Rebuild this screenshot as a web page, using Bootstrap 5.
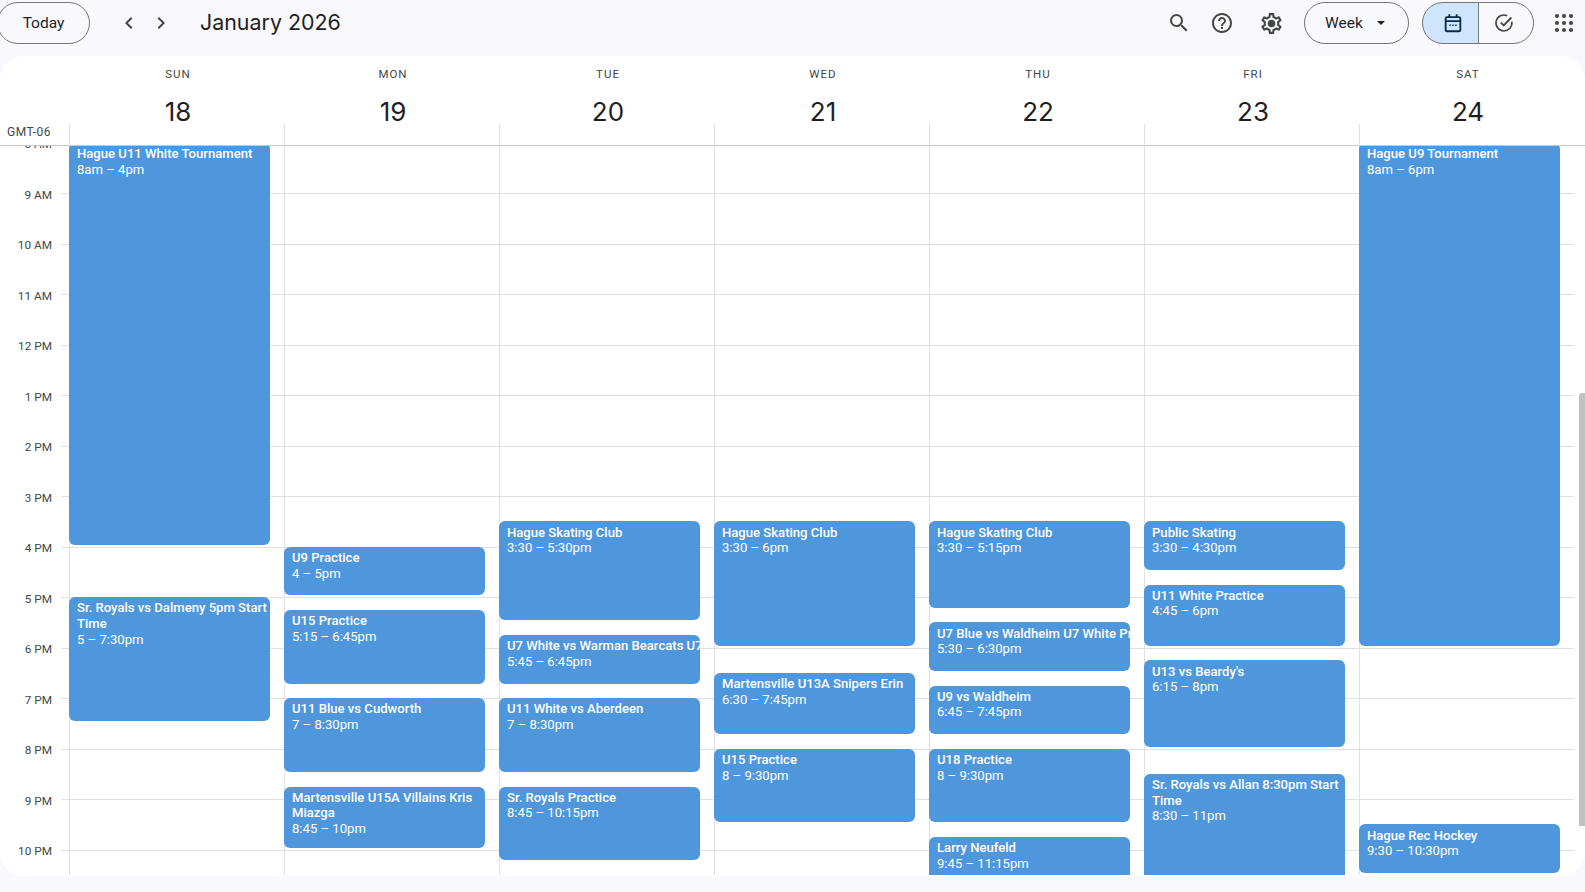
<!DOCTYPE html>
<html lang="en">
<head>
  <meta charset="UTF-8" />
  <meta name="viewport" content="width=device-width, initial-scale=1" />
  <title>Calendar - Week of January 18, 2026</title>
  <link href="https://cdn.jsdelivr.net/npm/bootstrap@5.3.0/dist/css/bootstrap.min.css" rel="stylesheet" />
  <style>
    html, body {
      height: 100%;
      margin: 0;
      overflow: hidden;
      background: #f9f8fc;
      font-family: Roboto, "Liberation Sans", sans-serif;
      color: #1f1f1f;
    }

    /* top bar */
    .cal-top {
      height: 56px;
      padding: 2px 9px 12px 0;
    }
    .pill-btn {
      height: 42px;
      border: 1px solid #747775;
      border-radius: 21px;
      background: transparent;
      color: #1f1f1f;
      font-size: 15.5px;
      font-weight: 400;
      padding: 2px 0 0;
    }
    .today-btn { width: 93px; margin-left: -3px; }
    .week-btn { width: 105px; margin-left: 11px; padding-right: 3px; gap: 14px; }
    .caret-down {
      width: 0;
      height: 0;
      margin-bottom: 2px;
      border-left: 4.5px solid transparent;
      border-right: 4.5px solid transparent;
      border-top: 4.5px solid #1f1f1f;
    }
    .icon-btn {
      width: 44px;
      height: 42px;
      padding: 0;
      border: 0;
      background: transparent;
    }
    .icon-btn svg { fill: #444746; }
    .chev-btn { width: 32px; }
    .chev-first { margin-left: 23px; }
    .search-btn { width: 43px; }
    .gear-btn { margin-left: 5px; }
    .cal-title {
      font-family: Inter, Roboto, sans-serif;
      font-size: 21.4px;
      font-weight: 400;
      margin: 0 0 2px 23px;
      line-height: 28px;
    }
    .view-switch { margin-left: 13px; width: 112px; height: 42px; }
    .view-switch .btn {
      padding: 0;
      border: 1px solid #747775;
      background: transparent;
    }
    .view-switch .btn:first-child { width: 57px; flex: none; padding-left: 5px; background: #cfe5fb; border-radius: 21px 0 0 21px; }
    .view-switch .btn:last-child { padding-right: 4px; border-radius: 0 21px 21px 0; margin-left: -1px; }
    .apps-btn { margin-left: 18px; width: 24px; height: 24px; }

    /* white sheet */
    .cal-sheet {
      height: 820px;
      background: #fff;
      border-radius: 24px;
      overflow: hidden;
    }
    .cal-head {
      height: 90px;
      border-bottom: 1px solid #c7c7cf;
    }
    .tz-cell {
      width: 69px;
      flex: none;
      padding: 0 0 5px 7px;
      font-size: 12px;
      letter-spacing: .5px;
      line-height: 16px;
      color: #444746;
      align-self: flex-end;
    }
    .head-day {
      width: 215px;
      flex: none;
      padding-top: 10px;
    }
    .head-name {
      font-size: 11.5px;
      font-weight: 400;
      letter-spacing: 1px;
      line-height: 16px;
      color: #444746;
      padding-left: 3px;
    }
    .head-num {
      font-family: Inter, Roboto, sans-serif;
      font-size: 26px;
      line-height: 26px;
      margin-top: 17px;
      margin-bottom: -1px;
      padding-left: 3px;
    }
    .head-tick {
      height: 22px;
      border-left: 1px solid #dfdfe6;
    }

    /* scrolling part */
    .cal-body {
      height: 729px;
      overflow: hidden;
    }
    .cal-scroll {
      margin-top: -53px;
      width: 1574px;
      flex: none;
    }
    .time-col { width: 69px; flex: none; }
    .hour-row { height: 50.5px; }
    .hour-label {
      width: 52px;
      flex: none;
      margin-bottom: -7.5px;
      text-align: right;
      font-size: 11.8px;
      line-height: 14px;
      color: #444746;
    }
    .hour-tick {
      width: 8px;
      margin-left: 9px;
      border-bottom: 1px solid #dfdfe6;
    }
    .day-col {
      width: 215px;
      flex: none;
      border-left: 1px solid #dfdfe6;
    }
    .hour-cell {
      height: 50.5px;
      border-bottom: 1px solid #dfdfe6;
    }
    .cal-event {
      position: absolute;
      left: -1px;
      width: 201px;
      padding: 3.3px 0 0 8px;
      background: #4f97dd;
      border-radius: 6px;
      color: #fff;
      font-size: 13.1px;
      line-height: 15.6px;
      overflow: hidden;
    }
    .cal-event b { display: block; font-weight: 500; }
    .scroll-track { flex: 1; padding-top: 247px; }
    .scroll-thumb {
      width: 6px;
      height: 433px;
      margin-left: auto;
      background: #c1c1c1;
      border-radius: 3px 0 0 0;
    }
  </style>
</head>
<body>

  <header class="cal-top d-flex align-items-center">
    <button class="btn pill-btn today-btn" type="button">Today</button>
    <button class="btn icon-btn chev-btn chev-first d-flex align-items-center justify-content-center" type="button" aria-label="Previous week">
      <svg width="24" height="24" viewBox="0 0 24 24"><path d="M15.41 7.41 14 6l-6 6 6 6 1.41-1.41L10.83 12z"/></svg>
    </button>
    <button class="btn icon-btn chev-btn d-flex align-items-center justify-content-center" type="button" aria-label="Next week">
      <svg width="24" height="24" viewBox="0 0 24 24"><path d="M8.59 16.59 10 18l6-6-6-6-1.41 1.41L13.17 12z"/></svg>
    </button>
    <h1 class="cal-title">January 2026</h1>

    <button class="btn icon-btn search-btn ms-auto d-flex align-items-center justify-content-center" type="button" aria-label="Search">
      <svg width="24" height="24" viewBox="0 0 24 24"><path d="M15.5 14h-.79l-.28-.27A6.471 6.471 0 0 0 16 9.5 6.5 6.5 0 1 0 9.5 16c1.61 0 3.09-.59 4.23-1.57l.27.28v.79l5 4.99L20.49 19l-4.99-5zm-6 0C7.01 14 5 11.99 5 9.5S7.01 5 9.5 5 14 7.01 14 9.5 11.99 14 9.5 14z"/></svg>
    </button>
    <button class="btn icon-btn d-flex align-items-center justify-content-center" type="button" aria-label="Help">
      <svg width="24" height="24" viewBox="0 0 24 24"><path d="M11 18h2v-2h-2v2zm1-16C6.48 2 2 6.48 2 12s4.48 10 10 10 10-4.48 10-10S17.52 2 12 2zm0 18c-4.41 0-8-3.59-8-8s3.59-8 8-8 8 3.59 8 8-3.59 8-8 8zm0-14c-2.21 0-4 1.79-4 4h2c0-1.1.9-2 2-2s2 .9 2 2c0 2-3 1.75-3 5h2c0-2.25 3-2.5 3-5 0-2.21-1.79-4-4-4z"/></svg>
    </button>
    <button class="btn icon-btn gear-btn d-flex align-items-center justify-content-center" type="button" aria-label="Settings">
      <svg width="25" height="25" viewBox="0 0 24 24"><circle cx="12" cy="12" r="3.6"/><path d="M19.43 12.98c.04-.32.07-.64.07-.98 0-.34-.03-.66-.07-.98l2.11-1.65c.19-.15.24-.42.12-.64l-2-3.46c-.09-.16-.26-.25-.44-.25-.06 0-.12.01-.17.03l-2.49 1c-.52-.4-1.08-.73-1.69-.98l-.38-2.65C14.46 2.18 14.25 2 14 2h-4c-.25 0-.46.18-.49.42l-.38 2.65c-.61.25-1.17.59-1.69.98l-2.49-1c-.06-.02-.12-.03-.18-.03-.17 0-.34.09-.43.25l-2 3.46c-.13.22-.07.49.12.64l2.11 1.65c-.04.32-.07.65-.07.98 0 .33.03.66.07.98l-2.11 1.65c-.19.15-.24.42-.12.64l2 3.46c.09.16.26.25.44.25.06 0 .12-.01.17-.03l2.49-1c.52.4 1.08.73 1.69.98l.38 2.65c.03.24.24.42.49.42h4c.25 0 .46-.18.49-.42l.38-2.65c.61-.25 1.17-.59 1.69-.98l2.49 1c.06.02.12.03.18.03.17 0 .34-.09.43-.25l2-3.46c.12-.22.07-.49-.12-.64l-2.11-1.65zm-1.98-1.71c.04.31.05.52.05.73 0 .21-.02.43-.05.73l-.14 1.13.89.7 1.08.84-.7 1.21-1.27-.51-1.04-.42-.9.68c-.43.32-.84.56-1.25.73l-1.06.43-.16 1.13-.2 1.35h-1.4l-.19-1.35-.16-1.13-1.06-.43c-.43-.18-.83-.41-1.23-.71l-.91-.7-1.06.43-1.27.51-.7-1.21 1.08-.84.89-.7-.14-1.13c-.03-.31-.05-.54-.05-.74s.02-.43.05-.73l.14-1.13-.89-.7-1.08-.84.7-1.21 1.27.51 1.04.42.9-.68c.43-.32.84-.56 1.25-.73l1.06-.43.16-1.13.2-1.35h1.39l.19 1.35.16 1.13 1.06.43c.43.18.83.41 1.23.71l.91.7 1.06-.43 1.27-.51.7 1.21-1.07.85-.89.7.14 1.13z"/></svg>
    </button>
    <button class="btn pill-btn week-btn d-flex align-items-center justify-content-center" type="button">Week <span class="caret-down"></span></button>
    <div class="btn-group view-switch" role="group">
      <button class="btn d-flex align-items-center justify-content-center" type="button" aria-label="Calendar">
        <svg width="22" height="22" viewBox="0 0 24 24" fill="none" stroke="#0b2a4a" stroke-width="2">
          <rect x="4" y="5.5" width="16" height="15.5" rx="1.5"/><path d="M4 10h16M8 2.5v3M16 2.5v3"/>
          <path d="M8 14.5h1.6M11.2 14.5h1.6M14.4 14.5H16" stroke-width="1.5"/>
        </svg>
      </button>
      <button class="btn d-flex align-items-center justify-content-center" type="button" aria-label="Tasks">
        <svg width="22" height="22" viewBox="0 0 24 24" fill="none" stroke="#444746" stroke-width="1.7">
          <path d="M20.5 10.5A8.7 8.7 0 1 1 15.5 4"/><path d="m8.5 11.5 3.2 3.2 8.3-8.7" stroke-width="2"/>
        </svg>
      </button>
    </div>
    <button class="btn p-0 border-0 apps-btn d-flex" type="button" aria-label="Apps">
      <svg width="24" height="24" viewBox="0 0 24 24" fill="#444746">
        <circle cx="5" cy="5" r="2.1"/><circle cx="12" cy="5" r="2.1"/><circle cx="19" cy="5" r="2.1"/>
        <circle cx="5" cy="12" r="2.1"/><circle cx="12" cy="12" r="2.1"/><circle cx="19" cy="12" r="2.1"/>
        <circle cx="5" cy="19" r="2.1"/><circle cx="12" cy="19" r="2.1"/><circle cx="19" cy="19" r="2.1"/>
      </svg>
    </button>
  </header>

  <main class="cal-sheet">
    <div id="cal-head" class="cal-head d-flex">
      <div class="tz-cell">GMT-06</div>
    </div>
    <div class="cal-body d-flex align-items-start">
      <div id="cal-scroll" class="cal-scroll d-flex"></div>
      <div class="scroll-track"><div class="scroll-thumb"></div></div>
    </div>
  </main>

  <script>
    const HOUR = 50.5;
    const FIRST_HOUR = 7;
    const LAST_HOUR = 23;

    const days = [
      { name: 'SUN', num: 18, events: [
        ['Hague U11 White Tournament', '8am – 4pm', 8, 16],
        ['Sr. Royals vs Dalmeny 5pm Start Time', '5 – 7:30pm', 17, 19.5]
      ]},
      { name: 'MON', num: 19, events: [
        ['U9 Practice', '4 – 5pm', 16, 17],
        ['U15 Practice', '5:15 – 6:45pm', 17.25, 18.75],
        ['U11 Blue vs Cudworth', '7 – 8:30pm', 19, 20.5],
        ['Martensville U15A Villains Kris Miazga', '8:45 – 10pm', 20.75, 22]
      ]},
      { name: 'TUE', num: 20, events: [
        ['Hague Skating Club', '3:30 – 5:30pm', 15.5, 17.5],
        ['U7 White vs Warman Bearcats U7 White', '5:45 – 6:45pm', 17.75, 18.75, true],
        ['U11 White vs Aberdeen', '7 – 8:30pm', 19, 20.5],
        ['Sr. Royals Practice', '8:45 – 10:15pm', 20.75, 22.25]
      ]},
      { name: 'WED', num: 21, events: [
        ['Hague Skating Club', '3:30 – 6pm', 15.5, 18],
        ['Martensville U13A Snipers Erin', '6:30 – 7:45pm', 18.5, 19.75, true],
        ['U15 Practice', '8 – 9:30pm', 20, 21.5]
      ]},
      { name: 'THU', num: 22, events: [
        ['Hague Skating Club', '3:30 – 5:15pm', 15.5, 17.25],
        ['U7 Blue vs Waldheim U7 White Practice', '5:30 – 6:30pm', 17.5, 18.5, true],
        ['U9 vs Waldheim', '6:45 – 7:45pm', 18.75, 19.75],
        ['U18 Practice', '8 – 9:30pm', 20, 21.5],
        ['Larry Neufeld', '9:45 – 11:15pm', 21.75, 23.25]
      ]},
      { name: 'FRI', num: 23, events: [
        ['Public Skating', '3:30 – 4:30pm', 15.5, 16.5],
        ['U11 White Practice', '4:45 – 6pm', 16.75, 18],
        ['U13 vs Beardy\'s', '6:15 – 8pm', 18.25, 20],
        ['Sr. Royals vs Allan 8:30pm Start Time', '8:30 – 11pm', 20.5, 23]
      ]},
      { name: 'SAT', num: 24, events: [
        ['Hague U9 Tournament', '8am – 6pm', 8, 18],
        ['Hague Rec Hockey', '9:30 – 10:30pm', 21.5, 22.5]
      ]}
    ];

    function hourLabel(h) {
      if (h === 12) return '12 PM';
      return h < 12 ? h + ' AM' : (h - 12) + ' PM';
    }

    const head = document.getElementById('cal-head');
    const scroll = document.getElementById('cal-scroll');

    // left column with the hour labels
    let timeHtml = '';
    for (let h = FIRST_HOUR; h < LAST_HOUR; h++) {
      timeHtml += `<div class="hour-row d-flex align-items-end">
        <span class="hour-label">${hourLabel(h + 1)}</span><span class="hour-tick"></span>
      </div>`;
    }
    scroll.innerHTML = `<div class="time-col">${timeHtml}</div>`;

    days.forEach(day => {
      head.insertAdjacentHTML('beforeend', `
        <div class="head-day text-center">
          <div class="head-name">${day.name}</div>
          <div class="head-num">${day.num}</div>
          <div class="head-tick"></div>
        </div>`);

      let cells = '';
      for (let h = FIRST_HOUR; h < LAST_HOUR; h++) cells += '<div class="hour-cell"></div>';

      let events = '';
      day.events.forEach(([title, time, start, end, oneLine]) => {
        const top = (start - FIRST_HOUR) * HOUR - 0.8;
        const height = (end - start) * HOUR - 2;
        events += `<div class="cal-event" style="top:${top}px;height:${height}px">
          <b class="${oneLine ? 'text-nowrap' : ''}">${title}</b>${time}
        </div>`;
      });

      scroll.insertAdjacentHTML('beforeend', `<div class="day-col position-relative">${cells}${events}</div>`);
    });
  </script>

  <script src="https://cdn.jsdelivr.net/npm/bootstrap@5.3.0/dist/js/bootstrap.bundle.min.js"></script>
</body>
</html>
